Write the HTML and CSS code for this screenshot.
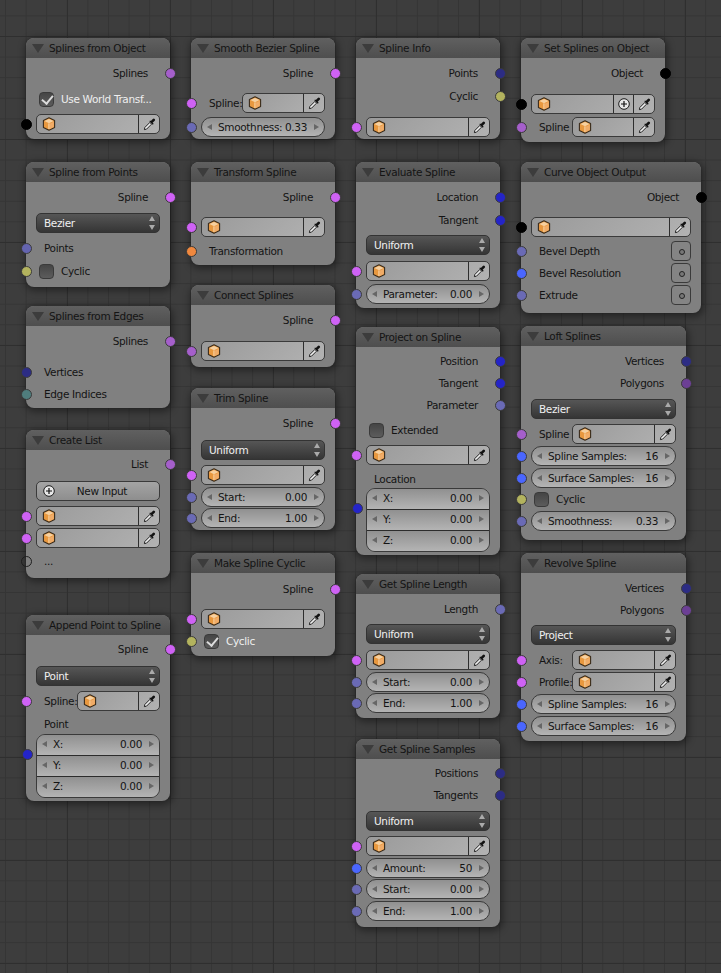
FILE: index.html
```html
<!DOCTYPE html>
<html lang="en">
<head>
<meta charset="utf-8">
<title>Spline nodes</title>
<link rel="stylesheet" href="styles.css">
</head>
<body>
<svg class="defs" width="0" height="0" aria-hidden="true">
  <symbol id="cube" viewBox="0 0 14 14">
    <path d="M7 .8 12.6 3.6V10.4L7 13.2 1.4 10.4V3.6Z" fill="#e8983f" stroke="#3a2c1c" stroke-width="1.1" stroke-linejoin="round"/>
    <path d="M2.4 4 7 1.9 11.6 4 7 6.2Z" fill="#f6d0a0"/>
    <path d="M7 6.4V12" stroke="#ffe6c4" stroke-width="1"/>
    <path d="M7.6 6.8 11.8 4.800V10L7.6 12.2Z" fill="#f0ac68"/>
  </symbol>
  <symbol id="drop" viewBox="0 0 14 14">
    <path d="M1.5 12.5 2 10.2 7.4 4.8 9.2 6.6 3.8 12Z" fill="#f0f0f0" stroke="#111" stroke-width="1"/>
    <path d="M6.8 3.4 10.6 7.2 11.5 6.3 10.4 5.2 12.6 3a1.4 1.4 0 0 0-2-2L8.4 3.200 7.600 2.600Z" fill="#111"/>
  </symbol>
  <symbol id="plus" viewBox="0 0 12 12">
    <circle cx="6" cy="6" r="5.300" fill="#e8e8e8" stroke="#1c1c1c"/>
    <path d="M6 3v6M3 6h6" stroke="#111" stroke-width="1.200"/>
  </symbol>
</svg>
<main class="canvas">

<section class="node a1">
  <h2 class="head">Splines from Object</h2>
  <div class="row out m5"><span>Splines</span><i class="sk r splist"></i></div>
  <div class="row chk on m6"><span class="box"></span><span>Use World Transf...</span></div>
  <div class="row fld m5"><i class="sk l blk"></i><div class="obj"><svg class="cube"><use href="#cube"/></svg><span class="pick"><svg class="drop"><use href="#drop"/></svg></span></div></div>
</section>

<section class="node a2">
  <h2 class="head">Spline from Points</h2>
  <div class="row out m5"><span>Spline</span><i class="sk r spl"></i></div>
  <div class="row fld m6"><div class="menu">Bezier</div></div>
  <div class="row in m5"><i class="sk l vec2"></i><span>Points</span></div>
  <div class="row chk m3"><i class="sk l bool"></i><span class="box"></span><span>Cyclic</span></div>
</section>

<section class="node a3">
  <h2 class="head">Splines from Edges</h2>
  <div class="row out m5"><span>Splines</span><i class="sk r splist"></i></div>
  <div class="row in m11"><i class="sk l vlist"></i><span>Vertices</span></div>
  <div class="row in m2"><i class="sk l teal"></i><span>Edge Indices</span></div>
</section>

<section class="node a4">
  <h2 class="head">Create List</h2>
  <div class="row out m4"><span>List</span><i class="sk r splist"></i></div>
  <div class="row fld m7"><div class="btn"><svg class="plus"><use href="#plus"/></svg>New Input</div></div>
  <div class="row fld m5"><i class="sk l spl"></i><div class="obj"><svg class="cube"><use href="#cube"/></svg><span class="pick"><svg class="drop"><use href="#drop"/></svg></span></div></div>
  <div class="row fld m2"><i class="sk l spl"></i><div class="obj"><svg class="cube"><use href="#cube"/></svg><span class="pick"><svg class="drop"><use href="#drop"/></svg></span></div></div>
  <div class="row in m3"><i class="sk l empty"></i><span>...</span></div>
</section>

<section class="node a5">
  <h2 class="head">Append Point to Spline</h2>
  <div class="row out m4"><span>Spline</span><i class="sk r spl"></i></div>
  <div class="row fld m7"><div class="menu">Point</div></div>
  <div class="row fld split m5"><i class="sk l spl"></i><label>Spline:</label><div class="obj"><svg class="cube"><use href="#cube"/></svg><span class="pick"><svg class="drop"><use href="#drop"/></svg></span></div></div>
  <div class="row in m3"><span>Point</span></div>
  <div class="vec m0"><i class="sk l vec3"></i>
    <div class="nf"><span>X:</span><span>0.00</span></div>
    <div class="nf"><span>Y:</span><span>0.00</span></div>
    <div class="nf"><span>Z:</span><span>0.00</span></div>
  </div>
</section>

<section class="node b1">
  <h2 class="head">Smooth Bezier Spline</h2>
  <div class="row out m5"><span>Spline</span><i class="sk r spl"></i></div>
  <div class="row fld split m10"><i class="sk l spl"></i><label>Spline:</label><div class="obj"><svg class="cube"><use href="#cube"/></svg><span class="pick"><svg class="drop"><use href="#drop"/></svg></span></div></div>
  <div class="row fld m4"><i class="sk l flt"></i><div class="num nf"><span>Smoothness:</span><span>0.33</span></div></div>
</section>

<section class="node b2">
  <h2 class="head">Transform Spline</h2>
  <div class="row out m5"><span>Spline</span><i class="sk r spl"></i></div>
  <div class="row fld m10"><i class="sk l spl"></i><div class="obj"><svg class="cube"><use href="#cube"/></svg><span class="pick"><svg class="drop"><use href="#drop"/></svg></span></div></div>
  <div class="row in m4"><i class="sk l mat"></i><span>Transformation</span></div>
</section>

<section class="node b3">
  <h2 class="head">Connect Splines</h2>
  <div class="row out m5"><span>Spline</span><i class="sk r spl"></i></div>
  <div class="row fld m11"><i class="sk l splist"></i><div class="obj"><svg class="cube"><use href="#cube"/></svg><span class="pick"><svg class="drop"><use href="#drop"/></svg></span></div></div>
</section>

<section class="node b4">
  <h2 class="head">Trim Spline</h2>
  <div class="row out m5"><span>Spline</span><i class="sk r spl"></i></div>
  <div class="row fld m7"><div class="menu">Uniform</div></div>
  <div class="row fld m5"><i class="sk l spl"></i><div class="obj"><svg class="cube"><use href="#cube"/></svg><span class="pick"><svg class="drop"><use href="#drop"/></svg></span></div></div>
  <div class="row fld m2"><i class="sk l flt"></i><div class="num nf"><span>Start:</span><span>0.00</span></div></div>
  <div class="row fld m1"><i class="sk l flt"></i><div class="num nf"><span>End:</span><span>1.00</span></div></div>
</section>

<section class="node b5">
  <h2 class="head">Make Spline Cyclic</h2>
  <div class="row out m6"><span>Spline</span><i class="sk r spl"></i></div>
  <div class="row fld m10"><i class="sk l spl"></i><div class="obj"><svg class="cube"><use href="#cube"/></svg><span class="pick"><svg class="drop"><use href="#drop"/></svg></span></div></div>
  <div class="row chk on m2"><i class="sk l bool"></i><span class="box"></span><span>Cyclic</span></div>
</section>

<section class="node c1">
  <h2 class="head">Spline Info</h2>
  <div class="row out m5"><span>Points</span><i class="sk r vlist"></i></div>
  <div class="row out m3"><span>Cyclic</span><i class="sk r bool"></i></div>
  <div class="row fld m11"><i class="sk l spl"></i><div class="obj"><svg class="cube"><use href="#cube"/></svg><span class="pick"><svg class="drop"><use href="#drop"/></svg></span></div></div>
</section>

<section class="node c2">
  <h2 class="head">Evaluate Spline</h2>
  <div class="row out m5"><span>Location</span><i class="sk r vec3"></i></div>
  <div class="row out m3"><span>Tangent</span><i class="sk r vec3"></i></div>
  <div class="row fld m5"><div class="menu">Uniform</div></div>
  <div class="row fld m6"><i class="sk l spl"></i><div class="obj"><svg class="cube"><use href="#cube"/></svg><span class="pick"><svg class="drop"><use href="#drop"/></svg></span></div></div>
  <div class="row fld m3"><i class="sk l flt"></i><div class="num nf"><span>Parameter:</span><span>0.00</span></div></div>
</section>

<section class="node c3">
  <h2 class="head">Project on Spline</h2>
  <div class="row out m4"><span>Position</span><i class="sk r vec3"></i></div>
  <div class="row out m2"><span>Tangent</span><i class="sk r vec3"></i></div>
  <div class="row out m2"><span>Parameter</span><i class="sk r flt"></i></div>
  <div class="row chk m5"><span class="box"></span><span>Extended</span></div>
  <div class="row fld m5"><i class="sk l spl"></i><div class="obj"><svg class="cube"><use href="#cube"/></svg><span class="pick"><svg class="drop"><use href="#drop"/></svg></span></div></div>
  <div class="row in m4"><span>Location</span></div>
  <div class="vec mn1"><i class="sk l vec3"></i>
    <div class="nf"><span>X:</span><span>0.00</span></div>
    <div class="nf"><span>Y:</span><span>0.00</span></div>
    <div class="nf"><span>Z:</span><span>0.00</span></div>
  </div>
</section>

<section class="node c4">
  <h2 class="head">Get Spline Length</h2>
  <div class="row out m5"><span>Length</span><i class="sk r flt"></i></div>
  <div class="row fld m5"><div class="menu">Uniform</div></div>
  <div class="row fld m6"><i class="sk l spl"></i><div class="obj"><svg class="cube"><use href="#cube"/></svg><span class="pick"><svg class="drop"><use href="#drop"/></svg></span></div></div>
  <div class="row fld m2"><i class="sk l flt"></i><div class="num nf"><span>Start:</span><span>0.00</span></div></div>
  <div class="row fld m1"><i class="sk l flt"></i><div class="num nf"><span>End:</span><span>1.00</span></div></div>
</section>

<section class="node c5">
  <h2 class="head">Get Spline Samples</h2>
  <div class="row out m4"><span>Positions</span><i class="sk r vlist"></i></div>
  <div class="row out m2"><span>Tangents</span><i class="sk r vlist"></i></div>
  <div class="row fld m6"><div class="menu">Uniform</div></div>
  <div class="row fld m5"><i class="sk l spl"></i><div class="obj"><svg class="cube"><use href="#cube"/></svg><span class="pick"><svg class="drop"><use href="#drop"/></svg></span></div></div>
  <div class="row fld m2"><i class="sk l int"></i><div class="num nf"><span>Amount:</span><span>50</span></div></div>
  <div class="row fld m1"><i class="sk l flt"></i><div class="num nf"><span>Start:</span><span>0.00</span></div></div>
  <div class="row fld m2"><i class="sk l flt"></i><div class="num nf"><span>End:</span><span>1.00</span></div></div>
</section>

<section class="node d1">
  <h2 class="head">Set Splines on Object</h2>
  <div class="row out m5"><span>Object</span><i class="sk r blk"></i></div>
  <div class="row fld m11"><i class="sk l blk"></i><div class="obj"><svg class="cube"><use href="#cube"/></svg><span class="pick add"><svg class="plus"><use href="#plus"/></svg></span><span class="pick"><svg class="drop"><use href="#drop"/></svg></span></div></div>
  <div class="row fld split m3"><i class="sk l splist"></i><label>Spline</label><div class="obj"><svg class="cube"><use href="#cube"/></svg><span class="pick"><svg class="drop"><use href="#drop"/></svg></span></div></div>
</section>

<section class="node d2">
  <h2 class="head">Curve Object Output</h2>
  <div class="row out m5"><span>Object</span><i class="sk r blk"></i></div>
  <div class="row fld m10"><i class="sk l blk"></i><div class="obj"><svg class="cube"><use href="#cube"/></svg><span class="pick"><svg class="drop"><use href="#drop"/></svg></span></div></div>
  <div class="row opt m4"><i class="sk l flt"></i><span>Bevel Depth</span><span class="dot"></span></div>
  <div class="row opt m2"><i class="sk l int"></i><span>Bevel Resolution</span><span class="dot"></span></div>
  <div class="row opt m2"><i class="sk l flt"></i><span>Extrude</span><span class="dot"></span></div>
</section>

<section class="node d3">
  <h2 class="head">Loft Splines</h2>
  <div class="row out m5"><span>Vertices</span><i class="sk r vlist"></i></div>
  <div class="row out m2"><span>Polygons</span><i class="sk r plist"></i></div>
  <div class="row fld m6"><div class="menu">Bezier</div></div>
  <div class="row fld split m5"><i class="sk l splist"></i><label>Spline</label><div class="obj"><svg class="cube"><use href="#cube"/></svg><span class="pick"><svg class="drop"><use href="#drop"/></svg></span></div></div>
  <div class="row fld m2"><i class="sk l int"></i><div class="num nf"><span>Spline Samples:</span><span>16</span></div></div>
  <div class="row fld m2"><i class="sk l int"></i><div class="num nf"><span>Surface Samples:</span><span>16</span></div></div>
  <div class="row chk m1"><i class="sk l bool"></i><span class="box"></span><span>Cyclic</span></div>
  <div class="row fld m2"><i class="sk l flt"></i><div class="num nf"><span>Smoothness:</span><span>0.33</span></div></div>
</section>

<section class="node d4">
  <h2 class="head">Revolve Spline</h2>
  <div class="row out m5"><span>Vertices</span><i class="sk r vlist"></i></div>
  <div class="row out m2"><span>Polygons</span><i class="sk r plist"></i></div>
  <div class="row fld m5"><div class="menu">Project</div></div>
  <div class="row fld split m5"><i class="sk l spl"></i><label>Axis:</label><div class="obj"><svg class="cube"><use href="#cube"/></svg><span class="pick"><svg class="drop"><use href="#drop"/></svg></span></div></div>
  <div class="row fld split m2"><i class="sk l spl"></i><label>Profile:</label><div class="obj"><svg class="cube"><use href="#cube"/></svg><span class="pick"><svg class="drop"><use href="#drop"/></svg></span></div></div>
  <div class="row fld m2"><i class="sk l int"></i><div class="num nf"><span>Spline Samples:</span><span>16</span></div></div>
  <div class="row fld m2"><i class="sk l int"></i><div class="num nf"><span>Surface Samples:</span><span>16</span></div></div>
</section>

</main>
</body>
</html>
```
FILE: styles.css
```css
* { box-sizing: border-box; }
html, body { margin: 0; height: 100%; }
body { background: #3d3d3d; overflow: hidden; }
.defs { position: absolute; }

.canvas {
  position: relative;
  width: 721px;
  height: 973px;
  font: 10.5px/20px "DejaVu Sans", sans-serif;
  letter-spacing: -.35px;
  color: #141414;
  background-color: #3d3d3d;
  background-image:
    linear-gradient(to right, #2f2f2f 1px, transparent 1px),
    linear-gradient(to bottom, #2f2f2f 1px, transparent 1px),
    linear-gradient(to right, #353535 1px, transparent 1px),
    linear-gradient(to bottom, #353535 1px, transparent 1px);
  background-size: 103px 103px, 103px 103px, 20.6px 20.6px, 20.6px 20.6px;
  background-position: 67px 0, 0 36px, 5px 0, 0 15.4px;
}

/* nodes sit on a free canvas */
.node {
  position: absolute;
  width: 144px;
  border-radius: 8px;
  background: #808080;
  box-shadow: 0 0 1px rgba(30,30,30,.5), 1px 2px 7px 2px rgba(0,0,0,.38);
}
.a1 { left: 26px; top: 38px; height: 101px; }
.a2 { left: 26px; top: 162px; height: 125px; }
.a3 { left: 26px; top: 306px; height: 102px; }
.a4 { left: 26px; top: 430px; height: 148px; }
.a5 { left: 26px; top: 615px; height: 186px; }
.b1 { left: 191px; top: 38px; height: 101px; }
.b2 { left: 191px; top: 162px; height: 103px; }
.b3 { left: 191px; top: 285px; height: 82px; }
.b4 { left: 191px; top: 388px; height: 142px; }
.b5 { left: 191px; top: 553px; height: 103px; }
.c1 { left: 356px; top: 38px; height: 101px; }
.c2 { left: 356px; top: 162px; height: 146px; }
.c3 { left: 356px; top: 327px; height: 228px; }
.c4 { left: 356px; top: 574px; height: 144px; }
.c5 { left: 356px; top: 739px; height: 188px; }
.d1 { left: 521px; top: 38px; height: 104px; }
.d2 { left: 521px; top: 162px; height: 151px; width: 180px; }
.d3 { left: 521px; top: 326px; height: 214px; width: 165px; }
.d4 { left: 521px; top: 553px; height: 188px; width: 165px; }

.head {
  position: relative;
  margin: 0;
  height: 20px;
  padding-left: 23px;
  font: inherit;
  line-height: 20px;
  color: #141414;
  white-space: nowrap;
  background: linear-gradient(#606060, #4e4e4e);
  border-radius: 8px 8px 0 0;
}
.head::before {
  content: "";
  position: absolute;
  left: 6px;
  top: 6px;
  border: 6px solid transparent;
  border-top: 9px solid #3c3c3c;
  border-bottom: 0;
}

.m0 { margin-top: 0; }
.mn1 { margin-top: -1px; }
.m1 { margin-top: 1px; }
.m2 { margin-top: 2px; }
.m3 { margin-top: 3px; }
.m4 { margin-top: 4px; }
.m5 { margin-top: 5px; }
.m6 { margin-top: 6px; }
.m7 { margin-top: 7px; }
.m10 { margin-top: 10px; }
.m11 { margin-top: 11px; }

.row { position: relative; height: 20px; display: flex; align-items: center; }
.out { justify-content: flex-end; padding-right: 22px; }
.in { padding-left: 18px; }
.fld { padding: 0 10px; }
.opt { padding: 0 10px 0 18px; justify-content: space-between; }
.chk { padding-left: 13px; gap: 7px; }
.chk.on { color: #efefef; }

.box {
  position: relative;
  width: 15px;
  height: 15px;
  border: 1px solid #3a3a3a;
  border-radius: 4px;
  background: linear-gradient(#454545, #5c5c5c);
}
.chk.on .box::after {
  content: "";
  position: absolute;
  left: 4px;
  top: 0;
  width: 5px;
  height: 9px;
  border: solid #dcdcdc;
  border-width: 0 2px 2px 0;
  transform: rotate(40deg);
}

/* sockets */
.sk {
  position: absolute;
  top: 4.5px;
  width: 11px;
  height: 11px;
  border-radius: 50%;
  border: 1px solid #3a3a3a;
  z-index: 2;
}
.sk.l { left: -5.5px; }
.sk.r { right: -5.5px; }
.spl { background: #cf62f5; }
.splist { background: #a55fcb; }
.blk { background: #000; border-color: #000; }
.flt { background: #6a6ab5; }
.vec2 { background: #6464b0; }
.int { background: #4a66ff; }
.vec3 { background: #2424c8; }
.vlist { background: #2c2c84; }
.plist { background: #6c3f95; }
.bool { background: #b3b35e; }
.mat { background: #f0883e; }
.teal { background: #4f7d7d; }
.empty { background: transparent; border-color: #1e1e1e; }

/* object picker */
.obj {
  flex: 1;
  min-width: 0;
  height: 20px;
  display: flex;
  align-items: center;
  padding-left: 5px;
  border: 1px solid #3a3a3a;
  border-radius: 5px;
  background: linear-gradient(135deg, #9a9a9a, #b2b2b2);
}
.cube { width: 14px; height: 14px; flex: none; margin-right: auto; }
.pick {
  width: 21px;
  height: 18px;
  flex: none;
  display: flex;
  align-items: center;
  justify-content: center;
  border-left: 1px solid #2e2e2e;
}
.pick.add { width: 20px; }
.drop { width: 13px; height: 13px; }
.plus { width: 12px; height: 12px; }

.split { padding-left: 18px; }
.split label { width: 33px; flex: none; white-space: nowrap; }

/* dark dropdown */
.menu {
  position: relative;
  flex: 1;
  height: 20px;
  padding-left: 7px;
  line-height: 18px;
  color: #f0f0f0;
  border: 1px solid #333;
  border-radius: 5px;
  background: linear-gradient(#565656, #353535);
}
.menu::before, .menu::after {
  content: "";
  position: absolute;
  right: 4px;
  border: 3px solid transparent;
  border-left-width: 3px;
}
.menu::before { top: 2px; border-top: 0; border-bottom: 5px solid #aaa; }
.menu::after { bottom: 2px; border-bottom: 0; border-top: 5px solid #aaa; }

/* buttons */
.btn {
  position: relative;
  flex: 1;
  height: 20px;
  text-align: center;
  line-height: 18px;
  padding-left: 8px;
  border: 1px solid #3a3a3a;
  border-radius: 5px;
  background: linear-gradient(#a4a4a4, #8e8e8e);
}
.btn .plus { position: absolute; left: 6px; top: 3px; }

.dot {
  position: relative;
  width: 20px;
  height: 20px;
  border: 1px solid #3a3a3a;
  border-radius: 4px;
  background: #848484;
}
.dot::after {
  content: "";
  position: absolute;
  left: 7px;
  top: 7px;
  width: 4px;
  height: 4px;
  border-radius: 50%;
  background: #777;
  border: 1px solid #222;
}

/* number fields */
.nf {
  position: relative;
  display: flex;
  justify-content: space-between;
  height: 20px;
  line-height: 18px;
  padding: 0 17px 0 16px;
  background: linear-gradient(#909090, #b4b4b4);
}
.nf::before, .nf::after {
  content: "";
  position: absolute;
  top: 6px;
  border: 3.500px solid transparent;
}
.nf::before { left: 5px; border-left: 0; border-right: 5px solid #666; }
.nf::after { right: 5px; border-right: 0; border-left: 5px solid #666; }
.num {
  flex: 1;
  border: 1px solid #3a3a3a;
  border-radius: 10px;
}
.vec {
  position: relative;
  margin-left: 10px;
  margin-right: 10px;
  border: 1px solid #3a3a3a;
  border-radius: 9px;
  overflow: visible;
}
.vec .nf + .nf { border-top: 1px solid #2c2c2c; height: 21px; }
.vec .nf:first-of-type { border-radius: 8px 8px 0 0; }
.vec .nf:last-of-type { border-radius: 0 0 8px 8px; }
.vec > .sk { top: 14px; left: -15.5px; }
```
